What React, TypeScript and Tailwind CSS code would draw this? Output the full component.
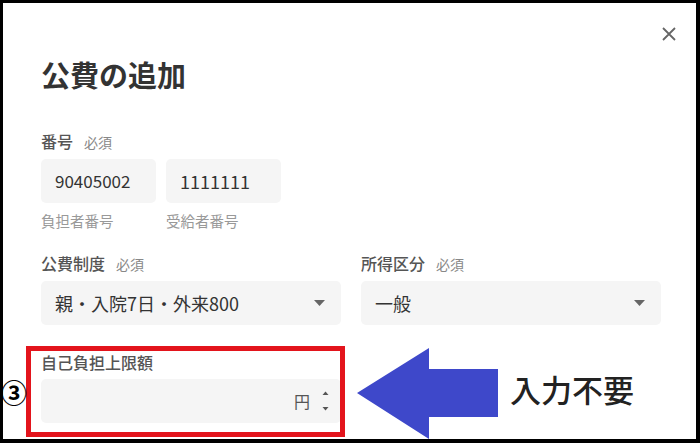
import React from "react";

const font = { fontFamily: '"Noto Sans CJK JP", "Noto Sans", sans-serif' };

function Caret() {
  return (
    <svg width="11" height="6" viewBox="0 0 11 6" className="shrink-0">
      <path d="M0 0 L11 0 L5.5 6 Z" fill="#666" />
    </svg>
  );
}

export default function App() {
  return (
    <div
      className="w-[700px] h-[443px] bg-black flex pt-[3px] pl-[3px] pr-[4px] pb-[4px] overflow-hidden"
      style={font}
    >
      <div className="relative flex-1 bg-white pl-[38px] pr-[35px] pt-[53px] text-[#333]">
        {/* close */}
        <button className="absolute left-[659px] top-[24px] w-[14px] h-[14px]">
          <svg width="14" height="14" viewBox="0 0 14 14">
            <path d="M1 1 L13 13 M13 1 L1 13" stroke="#666" strokeWidth="1.8" />
          </svg>
        </button>

        <h1 className="h-[36px] text-[29px] leading-[36px] font-bold text-[#333]">公費の追加</h1>

        {/* 番号 */}
        <div className="mt-[39px] h-[20px] flex items-baseline gap-[11px] leading-[20px]">
          <span className="text-[16px] font-medium text-[#555]">番号</span>
          <span className="text-[14px] text-[#888]">必須</span>
        </div>
        <div className="mt-[8px] flex gap-[10px]">
          <div className="w-[115px]">
            <div className="h-[44px] rounded-[5px] bg-[#f5f5f5] flex items-center pl-[14px] text-[17px] text-[#333]">
              90405002
            </div>
            <div className="mt-[8px] h-[20px] text-[14.5px] leading-[20px] text-[#999]">負担者番号</div>
          </div>
          <div className="w-[115px]">
            <div className="h-[44px] rounded-[5px] bg-[#f5f5f5] flex items-center pl-[14px] text-[18px] text-[#333]">
              1111111
            </div>
            <div className="mt-[8px] h-[20px] text-[14.5px] leading-[20px] text-[#999]">受給者番号</div>
          </div>
        </div>

        {/* 公費制度 / 所得区分 */}
        <div className="mt-[22px] flex gap-[20px]">
          <div className="w-[300px]">
            <div className="h-[20px] flex items-baseline gap-[11px] leading-[20px]">
              <span className="text-[16px] font-medium text-[#555]">公費制度</span>
              <span className="text-[14px] text-[#888]">必須</span>
            </div>
            <div className="mt-[8px] h-[44px] rounded-[5px] bg-[#f5f5f5] flex items-center justify-between pl-[14px] pr-[16px] text-[18px] text-[#333]">
              <span>親・入院7日・外来800</span>
              <Caret />
            </div>
          </div>
          <div className="w-[300px]">
            <div className="h-[20px] flex items-baseline gap-[11px] leading-[20px]">
              <span className="text-[16px] font-medium text-[#555]">所得区分</span>
              <span className="text-[14px] text-[#888]">必須</span>
            </div>
            <div className="mt-[8px] h-[44px] rounded-[5px] bg-[#f5f5f5] flex items-center justify-between pl-[14px] pr-[16px] text-[18px] text-[#333]">
              <span>一般</span>
              <Caret />
            </div>
          </div>
        </div>

        {/* 自己負担上限額 */}
        <div className="mt-[27px] w-[300px]">
          <div className="h-[20px] text-[16px] leading-[20px] font-medium text-[#555]">自己負担上限額</div>
          <div className="mt-[7px] h-[44px] rounded-[5px] bg-[#f5f5f5] flex items-center justify-end pr-[12px] gap-[12px]">
            <span className="text-[16px] text-[#555]">円</span>
            <svg width="7" height="20" viewBox="0 0 7 20">
              <path d="M0.5 4 L6.5 4 L3.5 0.5 Z" fill="#555" />
              <path d="M0.5 16 L6.5 16 L3.5 19.5 Z" fill="#555" />
            </svg>
          </div>
        </div>

        {/* annotations */}
        <div className="absolute left-[23px] top-[343px] w-[319px] h-[91px] border-[5px] border-[#e3141c]" />
        <div className="absolute left-[-2px] top-[374px] text-[26px] leading-[30px] font-bold text-black">③</div>
        <svg className="absolute left-[354px] top-[345px]" width="142" height="91" viewBox="0 0 142 91">
          <path d="M0 45 L72 0 L72 21 L141 21 L141 69 L72 69 L72 91 Z" fill="#3e48ca" />
        </svg>
        <div className="absolute left-[507px] top-[366px] text-[31px] leading-[40px] font-medium text-[#222]">入力不要</div>
      </div>
    </div>
  );
}
